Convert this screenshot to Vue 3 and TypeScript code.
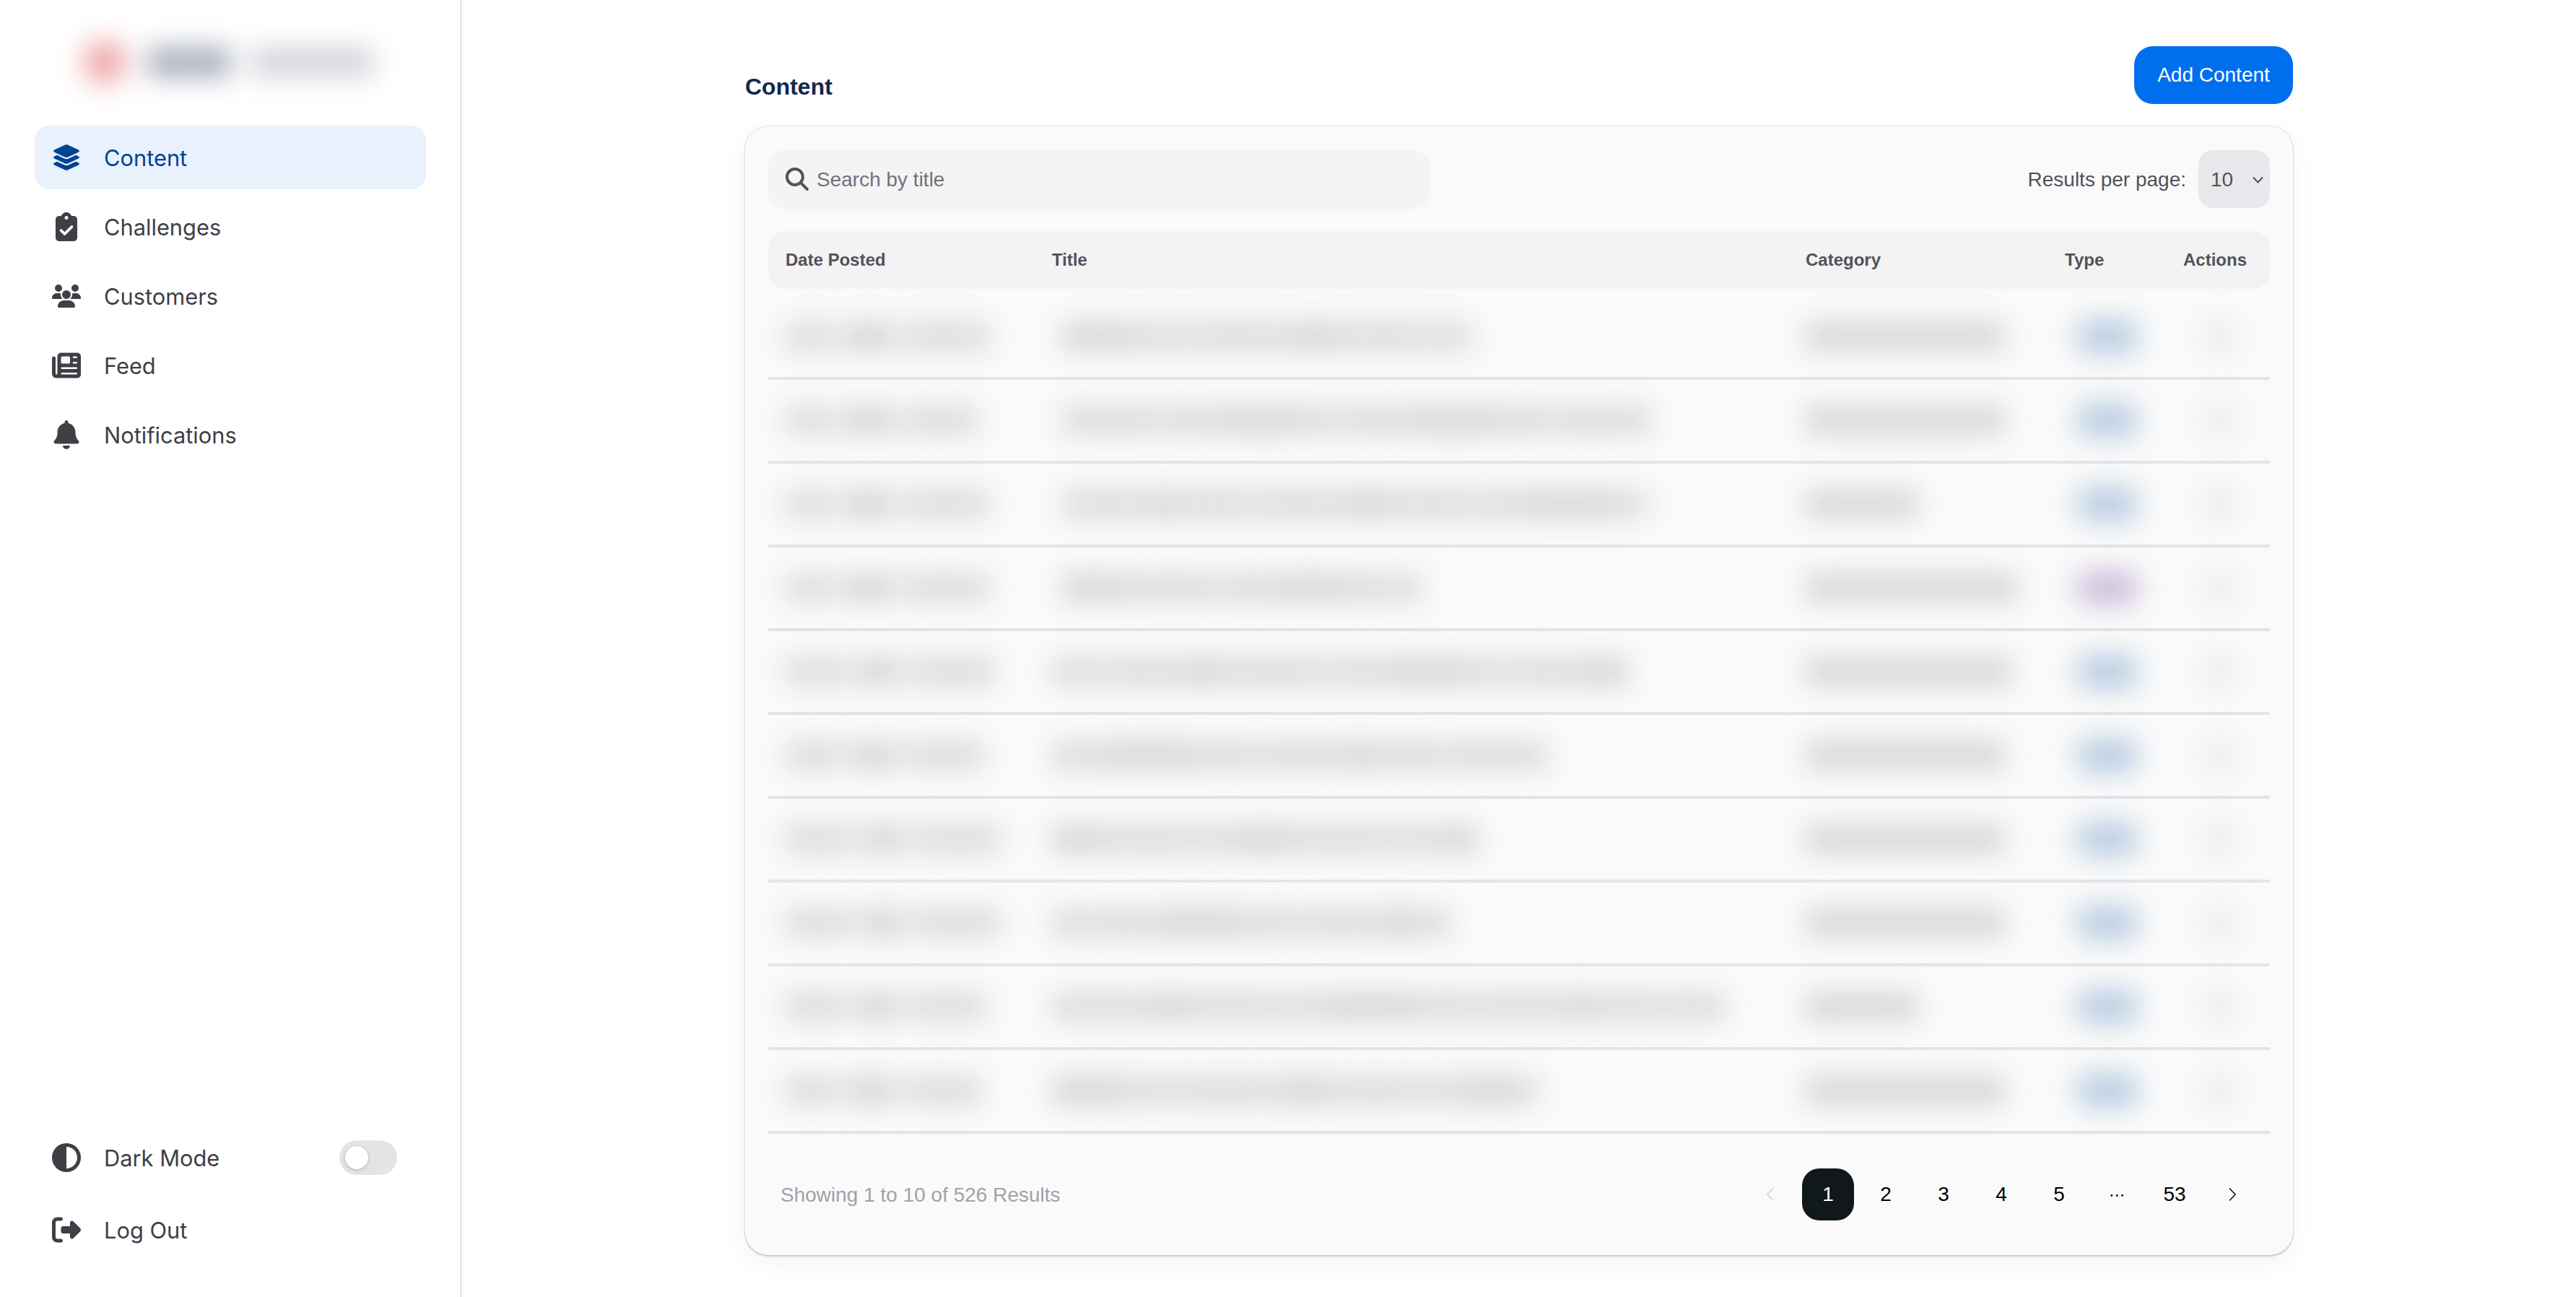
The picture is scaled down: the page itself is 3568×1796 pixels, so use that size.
<script setup lang="ts">
interface Row {
  date: number[];
  titleStart: number;
  titleWidth: number;
  category: number;
  purple?: boolean;
}

const icons = {
  layers: { box: '0 0 576 512', d: 'M264.5 5.2c14.9-6.9 32.1-6.9 47 0l218.6 101c8.5 3.9 13.9 12.4 13.9 21.8s-5.4 17.9-13.9 21.8l-218.6 101c-14.9 6.9-32.1 6.9-47 0L45.9 149.8C37.4 145.8 32 137.3 32 128s5.4-17.9 13.9-21.8L264.5 5.2zM476.9 209.6l53.2 24.6c8.5 3.9 13.9 12.4 13.9 21.8s-5.4 17.9-13.9 21.8l-218.6 101c-14.9 6.9-32.1 6.9-47 0L45.9 277.8C37.4 273.8 32 265.3 32 256s5.4-17.9 13.9-21.8l53.2-24.6 152 70.2c23.4 10.8 50.4 10.8 73.8 0l152-70.2zm-152 198.2l152-70.2 53.2 24.6c8.5 3.9 13.9 12.4 13.9 21.8s-5.4 17.9-13.9 21.8l-218.6 101c-14.9 6.9-32.1 6.9-47 0L45.9 405.8C37.4 401.8 32 393.3 32 384s5.4-17.9 13.9-21.8l53.2-24.6 152 70.2c23.4 10.8 50.4 10.8 73.8 0z' },
  clipboard: { box: '0 0 384 512', d: 'M192 0c-41.8 0-77.4 26.7-90.5 64H64C28.7 64 0 92.7 0 128V448c0 35.3 28.7 64 64 64H320c35.3 0 64-28.7 64-64V128c0-35.3-28.7-64-64-64H282.5C269.4 26.7 233.8 0 192 0zm0 64a32 32 0 1 1 0 64 32 32 0 1 1 0-64zM305 273L177 401c-9.4 9.4-24.6 9.4-33.9 0L79 337c-9.4-9.4-9.4-24.6 0-33.9s24.6-9.4 33.9 0l47 47L271 239c9.4-9.4 24.6-9.4 33.9 0s9.4 24.6 0 33.9z' },
  users: { box: '0 0 640 512', d: 'M144 0a80 80 0 1 1 0 160A80 80 0 1 1 144 0zM512 0a80 80 0 1 1 0 160A80 80 0 1 1 512 0zM0 298.7C0 239.8 47.8 192 106.7 192h42.7c15.9 0 31 3.5 44.6 9.7c-1.3 7.2-1.9 14.7-1.9 22.3c0 38.2 16.8 72.5 43.3 96c-.2 0-.4 0-.7 0H21.3C9.6 320 0 310.4 0 298.7zM405.3 320c-.2 0-.4 0-.7 0c26.6-23.5 43.3-57.8 43.3-96c0-7.6-.7-15-1.9-22.3c13.6-6.3 28.7-9.7 44.6-9.7h42.7C592.2 192 640 239.8 640 298.7c0 11.8-9.6 21.3-21.3 21.3H405.3zM224 224a96 96 0 1 1 192 0 96 96 0 1 1 -192 0zM128 485.3C128 411.7 187.7 352 261.3 352H378.7C452.3 352 512 411.7 512 485.3c0 14.7-11.9 26.7-26.7 26.7H154.7c-14.7 0-26.7-11.9-26.7-26.7z' },
  newspaper: { box: '0 0 512 512', d: 'M96 96c0-35.3 28.7-64 64-64H448c35.3 0 64 28.7 64 64V416c0 35.3-28.7 64-64 64H80c-44.2 0-80-35.8-80-80V128c0-17.7 14.3-32 32-32s32 14.3 32 32V400c0 8.8 7.2 16 16 16s16-7.2 16-16V96zm64 24v80c0 13.3 10.7 24 24 24H296c13.3 0 24-10.7 24-24V120c0-13.3-10.7-24-24-24H184c-13.3 0-24 10.7-24 24zm208-8c0 8.8 7.2 16 16 16h48c8.8 0 16-7.2 16-16s-7.2-16-16-16H384c-8.8 0-16 7.2-16 16zm0 96c0 8.8 7.2 16 16 16h48c8.8 0 16-7.2 16-16s-7.2-16-16-16H384c-8.8 0-16 7.2-16 16zM160 304c0 8.8 7.2 16 16 16H432c8.8 0 16-7.2 16-16s-7.2-16-16-16H176c-8.8 0-16 7.2-16 16zm0 96c0 8.8 7.2 16 16 16H432c8.8 0 16-7.2 16-16s-7.2-16-16-16H176c-8.8 0-16 7.2-16 16z' },
  bell: { box: '0 0 448 512', d: 'M224 0c-17.7 0-32 14.3-32 32V51.2C119 66 64 130.6 64 208v18.8c0 47-17.3 92.4-48.5 127.6l-7.4 8.3c-8.4 9.4-10.4 22.9-5.3 34.4S19.4 416 32 416H416c12.6 0 24-7.4 29.2-18.9s3.1-25-5.3-34.4l-7.4-8.3C401.3 319.2 384 273.9 384 226.8V208c0-77.4-55-142-128-156.8V32c0-17.7-14.3-32-32-32zm45.3 493.3c12-12 18.7-28.3 18.7-45.3H224 160c0 17 6.7 33.3 18.7 45.3s28.3 18.7 45.3 18.7s33.3-6.7 45.3-18.7z' },
  contrast: { box: '0 0 512 512', d: 'M448 256c0-106-86-192-192-192V448c106 0 192-86 192-192zM0 256a256 256 0 1 1 512 0A256 256 0 1 1 0 256z' },
  logout: { box: '0 0 512 512', d: 'M377.9 105.9L500.7 228.7c7.2 7.2 11.3 17.1 11.3 27.3s-4.1 20.1-11.3 27.3L377.9 406.1c-6.4 6.4-15 9.9-24 9.9c-18.7 0-33.9-15.2-33.9-33.9l0-62.1-128 0c-17.7 0-32-14.3-32-32l0-64c0-17.7 14.3-32 32-32l128 0 0-62.1c0-18.7 15.2-33.9 33.9-33.9c9 0 17.6 3.6 24 9.9zM160 96L96 96c-17.7 0-32 14.3-32 32l0 256c0 17.7 14.3 32 32 32l64 0c17.7 0 32 14.3 32 32s-14.3 32-32 32l-64 0c-53 0-96-43-96-96L0 128C0 75 43 32 96 32l64 0c17.7 0 32 14.3 32 32s-14.3 32-32 32z' },
};

const navItems = [
  { label: 'Content', icon: icons.layers, active: true },
  { label: 'Challenges', icon: icons.clipboard },
  { label: 'Customers', icon: icons.users },
  { label: 'Feed', icon: icons.newspaper },
  { label: 'Notifications', icon: icons.bell },
];

const columns = ['Date Posted', 'Title', 'Category', 'Type', 'Actions'];

// the row contents are blurred out in the design, so only their extents are kept
const rows: Row[] = [
  { date: [67, 71, 121], titleStart: 14, titleWidth: 568, category: 275 },
  { date: [67, 71, 104], titleStart: 14, titleWidth: 813, category: 275 },
  { date: [67, 71, 121], titleStart: 14, titleWidth: 810, category: 155 },
  { date: [67, 71, 121], titleStart: 14, titleWidth: 498, category: 293 },
  { date: [85, 63, 119], titleStart: 0, titleWidth: 798, category: 285 },
  { date: [79, 65, 107], titleStart: 0, titleWidth: 687, category: 275 },
  { date: [93, 61, 119], titleStart: 0, titleWidth: 589, category: 275 },
  { date: [93, 61, 119], titleStart: 0, titleWidth: 553, category: 275 },
  { date: [85, 61, 107], titleStart: 0, titleWidth: 932, category: 155 },
  { date: [73, 67, 107], titleStart: 0, titleWidth: 673, category: 275 },
];

const wordWidths = [104, 62, 138, 74, 116, 50, 88, 126, 68];

// cut a bar of the given width into word sized pieces
const splitWords = (total: number, seed: number): number[] => {
  const words: number[] = [];
  let left = total;
  let i = seed;
  while (left > 0) {
    const w = Math.min(wordWidths[i % wordWidths.length], left);
    words.push(w);
    left -= w + 3;
    i += 1;
  }
  return words;
};

const pages = ['1', '2', '3', '4', '5', '⋯', '53'];
</script>

<template>
  <div class="layout">
    <aside class="sidebar">
      <div>
        <div class="logo">
          <span class="logo-mark"></span>
          <span class="logo-word"></span>
          <span class="logo-word light"></span>
        </div>
        <nav class="nav">
          <a v-for="item in navItems" :key="item.label" class="nav-item" :class="{ active: item.active }">
            <svg class="nav-icon" :viewBox="item.icon.box"><path :d="item.icon.d" /></svg>
            <span>{{ item.label }}</span>
          </a>
        </nav>
      </div>
      <div class="sidebar-bottom">
        <div class="nav-item">
          <svg class="nav-icon" :viewBox="icons.contrast.box"><path :d="icons.contrast.d" /></svg>
          <span>Dark Mode</span>
          <span class="toggle"><span class="knob"></span></span>
        </div>
        <a class="nav-item">
          <svg class="nav-icon" :viewBox="icons.logout.box"><path :d="icons.logout.d" /></svg>
          <span>Log Out</span>
        </a>
      </div>
    </aside>

    <main class="main">
      <header class="page-head">
        <h1>Content</h1>
        <button class="add-btn">Add Content</button>
      </header>

      <section class="card">
        <div class="toolbar">
          <label class="search">
            <svg class="search-icon" viewBox="0 0 512 512"><path d="M416 208c0 45.9-14.9 88.3-40 122.7L502.6 457.4c12.5 12.5 12.5 32.8 0 45.3s-32.8 12.5-45.3 0L330.7 376c-34.4 25.2-76.8 40-122.7 40C93.1 416 0 322.9 0 208S93.1 0 208 0S416 93.1 416 208zM208 352a144 144 0 1 0 0-288 144 144 0 1 0 0 288z" /></svg>
            <input type="text" placeholder="Search by title" />
          </label>
          <div class="per-page">
            <span>Results per page:</span>
            <div class="select">
              <span>10</span>
              <svg viewBox="0 0 15 10"><path d="M1 1.500l6.500 7 6.500-7" /></svg>
            </div>
          </div>
        </div>

        <div class="table-row table-head">
          <div v-for="col in columns" :key="col" class="cell">{{ col }}</div>
        </div>

        <div class="table-body">
          <div v-for="(row, r) in rows" :key="r" class="table-row body-row">
            <div class="cell">
              <div class="bars date-bars">
                <span v-for="(w, i) in row.date" :key="i" class="bar" :class="{ dark: i === 1 }" :style="{ width: w + 'px' }"></span>
              </div>
            </div>
            <div class="cell">
              <div class="bars" :style="{ marginLeft: row.titleStart + 'px' }">
                <span v-for="(w, i) in splitWords(row.titleWidth, r * 2)" :key="i" class="bar" :class="{ dark: (i + r) % 3 === 0 }" :style="{ width: w + 'px' }"></span>
              </div>
            </div>
            <div class="cell">
              <div class="bars">
                <span class="bar dark" :style="{ width: row.category + 'px' }"></span>
              </div>
            </div>
            <div class="cell">
              <div class="bars">
                <span class="pill" :class="{ purple: row.purple || r === 3 }"></span>
              </div>
            </div>
            <div class="cell">
              <div class="bars">
                <span class="action-dot"></span>
              </div>
            </div>
          </div>
        </div>

        <footer class="card-foot">
          <span class="showing">Showing 1 to 10 of 526 Results</span>
          <div class="pager">
            <span class="page arrow disabled">
              <svg viewBox="0 0 12 20"><path d="M10 1.500L2 10l8 8.500" /></svg>
            </span>
            <span v-for="(p, i) in pages" :key="p" class="page" :class="{ current: i === 0, dots: p === '⋯' }">{{ p }}</span>
            <span class="page arrow">
              <svg viewBox="0 0 12 20"><path d="M2 1.500L10 10l-8 8.500" /></svg>
            </span>
          </div>
        </footer>
      </section>
    </main>
  </div>
</template>

<style>
html,
body {
  background: #fff;
  overflow: hidden;
}
</style>

<style scoped>
.layout {
  display: flex;
  height: 100vh;
  font-family: "Liberation Sans", Arial, sans-serif;
  color: #11181c;
}

.sidebar {
  width: 640px;
  flex: none;
  box-sizing: border-box;
  border-right: 3px solid #e9e9eb;
  padding: 0 48px 49px;
  display: flex;
  flex-direction: column;
  justify-content: space-between;
  font-family: Inter, "Liberation Sans", sans-serif;
}

.logo {
  height: 174px;
  display: flex;
  align-items: center;
  gap: 28px;
  padding: 0 0 2px 66px;
  box-sizing: border-box;
  filter: blur(18px);
}

.logo-mark {
  width: 62px;
  height: 62px;
  border-radius: 50%;
  background: #f0aaaa;
}

.logo-word {
  width: 116px;
  height: 42px;
  background: #a8afbb;
  border-radius: 6px;
}

.logo-word.light {
  width: 170px;
  background: #d2d5da;
}

.nav {
  display: flex;
  flex-direction: column;
  gap: 8px;
  width: 542px;
}

.nav-item {
  height: 88px;
  display: flex;
  align-items: center;
  gap: 32px;
  padding: 0 24px;
  box-sizing: border-box;
  border-radius: 20px;
  font-size: 30.8px;
  color: #3f3f46;
}

.nav-item.active {
  background: #e9f1fd;
  color: #004493;
}

.nav-icon {
  width: 40px;
  height: 40px;
  flex: none;
  fill: currentColor;
}

.sidebar-bottom {
  display: flex;
  flex-direction: column;
  gap: 12px;
  width: 542px;
}

.toggle {
  margin-left: auto;
  margin-right: 16px;
  width: 80px;
  height: 48px;
  border-radius: 24px;
  background: #e4e4e7;
  display: flex;
  align-items: center;
  padding-left: 8px;
  box-sizing: border-box;
}

.knob {
  width: 32px;
  height: 32px;
  border-radius: 50%;
  background: #fff;
  box-shadow: 0 1px 4px rgba(0, 0, 0, 0.25);
}

.main {
  flex: 1;
  min-width: 0;
  padding: 64px 392px 0 392px;
  box-sizing: border-box;
}

.page-head {
  display: flex;
  justify-content: space-between;
  align-items: flex-end;
  margin-bottom: 31px;
}

.page-head h1 {
  margin: 0;
  font-size: 32px;
  line-height: 48px;
  font-weight: 700;
  color: #11294d;
}

.add-btn {
  width: 220px;
  height: 80px;
  border: 0;
  border-radius: 26px;
  background: #006fee;
  color: #fff;
  font-family: inherit;
  font-size: 28px;
  padding: 0;
}

.card {
  background: #fafafa;
  border-radius: 32px;
  padding: 33px 32px 48px;
  box-shadow: 0 0 2px rgba(0, 0, 0, 0.3), 0 2px 2px rgba(0, 0, 0, 0.14), 0 10px 34px rgba(0, 0, 0, 0.05);
}

.toolbar {
  display: flex;
  justify-content: space-between;
  align-items: center;
  margin-bottom: 32px;
}

.search {
  width: 916px;
  height: 80px;
  background: #f4f4f5;
  border-radius: 24px;
  box-shadow: 0 1px 5px rgba(0, 0, 0, 0.03);
  display: flex;
  align-items: center;
  gap: 11px;
  padding: 0 24px;
  box-sizing: border-box;
}

.search-icon {
  width: 32px;
  height: 32px;
  flex: none;
  fill: #52525b;
}

.search input {
  flex: 1;
  min-width: 0;
  border: 0;
  outline: 0;
  background: transparent;
  font-family: inherit;
  font-size: 28px;
  padding: 2px 0 0;
}

.search input::placeholder {
  color: #71717a;
  opacity: 1;
}

.per-page {
  display: flex;
  align-items: center;
  gap: 17px;
  font-size: 28px;
  color: #52525b;
}

.per-page > span {
  padding-top: 2px;
}

.select {
  width: 99px;
  height: 80px;
  background: #e8e8ec;
  border-radius: 20px;
  display: flex;
  align-items: center;
  justify-content: space-between;
  padding: 2px 9px 0 17px;
  box-sizing: border-box;
}

.select svg {
  width: 15px;
  height: 10px;
  fill: none;
  stroke: #52525b;
  stroke-width: 2;
}

.table-row {
  display: grid;
  grid-template-columns: 369px 1044px 359px 164px 144px;
  align-items: center;
}

.table-head {
  height: 80px;
  background: #f3f3f4;
  border-radius: 24px;
  margin-bottom: 10px;
  font-size: 24px;
  font-weight: 700;
  color: #52525b;
}

.cell {
  padding-left: 24px;
  min-width: 0;
}

.body-row {
  height: 116px;
  box-sizing: border-box;
  border-bottom: 4px solid #e4e4e7;
}

.bars {
  display: flex;
  align-items: center;
  gap: 3px;
  height: 36px;
  filter: blur(18px);
}

.date-bars {
  gap: 12px;
}

.bar {
  height: 38px;
  flex: none;
  background: #dbdbdb;
}

.bar.dark {
  background: #d5d5d5;
}

.pill {
  width: 90px;
  height: 50px;
  margin-left: 14px;
  border-radius: 25px;
  background: #bccfe3;
}

.pill.purple {
  background: #cfc1dd;
}

.action-dot {
  width: 52px;
  height: 52px;
  margin-left: 24px;
  border-radius: 50%;
  background: #ededed;
}

.card-foot {
  margin-top: 48px;
  display: flex;
  justify-content: space-between;
  align-items: center;
  padding: 0 16px 0 17px;
}

.showing {
  font-size: 28px;
  color: #a1a1aa;
  padding-top: 2px;
}

.pager {
  display: flex;
  gap: 8px;
}

.page {
  width: 72px;
  height: 72px;
  border-radius: 24px;
  display: flex;
  align-items: center;
  justify-content: center;
  font-size: 28px;
  color: #000;
}

.page.current {
  background: #11181c;
  color: #fff;
}

.page.dots {
  font-family: "DejaVu Sans", sans-serif;
  font-size: 22px;
}

.arrow svg {
  width: 12px;
  height: 20px;
  fill: none;
  stroke: #11181c;
  stroke-width: 1.6;
}

.arrow.disabled svg {
  stroke: #d4d4d8;
}
</style>
